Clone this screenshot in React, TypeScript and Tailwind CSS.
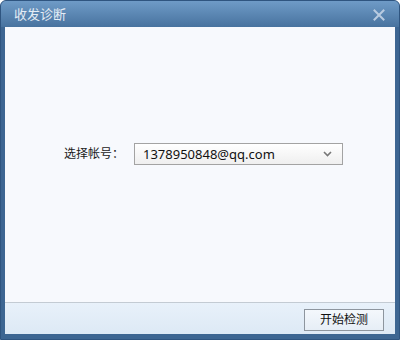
import React from 'react';

const font = { fontFamily: '"Noto Sans", "Noto Sans CJK SC", sans-serif' };

export default function App() {
  return (
    <div className="w-[400px] h-[340px] flex flex-col bg-[#3d6692] rounded-t-[6px] overflow-hidden border border-[#2f5580]" style={font}>
      {/* title bar */}
      <div className="h-[26px] shrink-0 flex items-center justify-between pl-[13px] pr-[14px] bg-gradient-to-b from-[#6f9bc7] to-[#48739f]">
        <span className="text-[13px] leading-none text-[#e4ecf5]">收发诊断</span>
        <svg width="12" height="12" viewBox="0 0 12 12" className="mt-[1px]">
          <path d="M1.5 1.5 L10.5 10.5 M10.5 1.5 L1.5 10.5" stroke="#b9cbe0" strokeWidth="2" strokeLinecap="square" />
        </svg>
      </div>

      {/* body */}
      <div className="flex-1 flex flex-col px-[4px] pb-[5px]">
        <div className="flex-1 bg-[#f7f9fd] flex justify-center pt-[116px] border-b border-[#c3cbd3]">
          <div className="flex items-start gap-[10px] ml-[7px]">
            <span className="text-[12px] leading-[22px] text-[#1a1a1a]">选择帐号：</span>
            <div className="w-[209px] h-[22px] flex items-center justify-between pl-[8px] pr-[10px] border border-[#a3a3a3] bg-gradient-to-b from-[#ffffff] to-[#efefef]">
              <span className="text-[13px] leading-none text-[#111]">1378950848@qq.com</span>
              <svg width="9" height="6" viewBox="0 0 9 6">
                <path d="M1 1 L4.5 4.5 L8 1" fill="none" stroke="#777" strokeWidth="1.6" />
              </svg>
            </div>
          </div>
        </div>
        <div className="h-[31px] shrink-0 flex items-center justify-end pr-[11px] bg-gradient-to-b from-[#e8f1fa] to-[#dde9f5]">
          <button className="w-[80px] h-[22px] mt-[3px] border border-[#8d959e] bg-gradient-to-b from-[#f4f8fc] to-[#e6eef6] text-[12px] leading-none text-[#111]">
            开始检测
          </button>
        </div>
      </div>
    </div>
  );
}
